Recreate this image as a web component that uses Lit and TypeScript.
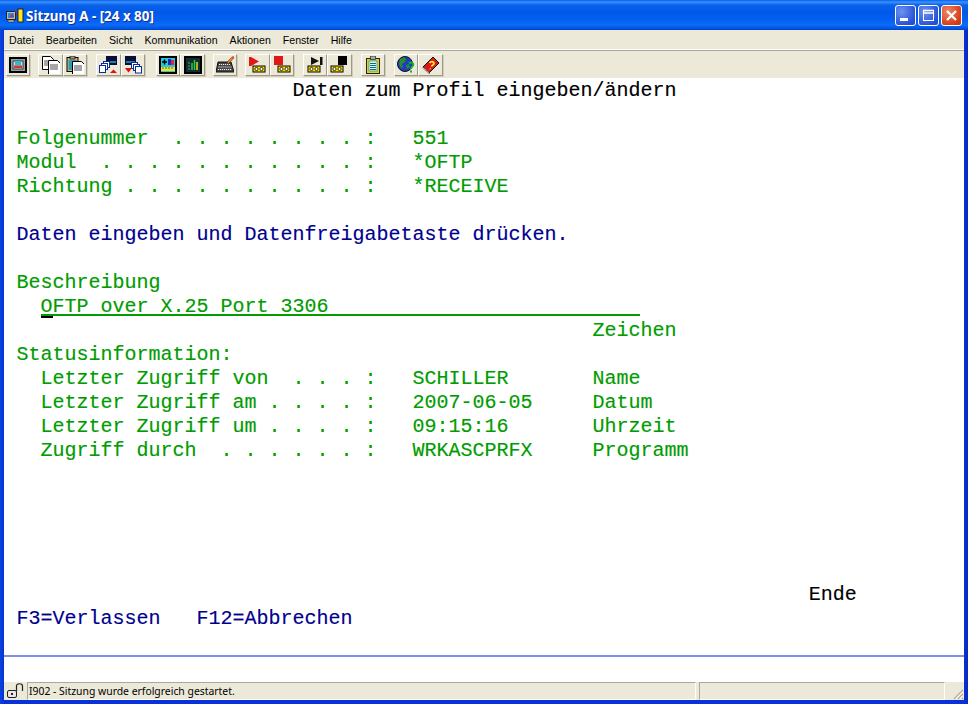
import { LitElement, html, css, svg } from "lit";
import { customElement } from "lit/decorators.js";

const tape = (x = 0) => svg`<g transform="translate(${x} 0)"><rect x="5" y="10" width="12" height="6" fill="#ffe400" stroke="#000" stroke-width="1"/><circle cx="8.5" cy="13" r="1.6" fill="#fff" stroke="#000" stroke-width=".8"/><circle cx="13.5" cy="13" r="1.6" fill="#fff" stroke="#000" stroke-width=".8"/></g>`;
const page = (x: number, y: number, w: number, h: number, c = "#000") => svg`<path d="M${x + .5} ${y + .5}h${w - 3}l3 3v${h - 3}h-${w}z" fill="#fff" stroke="${c}"/><path d="M${x + 2} ${y + 5}h${w - 4}M${x + 2} ${y + 7}h${w - 4}M${x + 2} ${y + 9}h${w - 4}" stroke="${c}" stroke-width=".7"/>`;

const icons = [
  svg`<rect x="1" y="2" width="16" height="14" fill="#8fa4a8" stroke="#000" stroke-width="2"/><rect x="4" y="5" width="10" height="8" fill="#d7d7d7" stroke="#222" stroke-width=".8"/><rect x="6" y="5.500" width="6" height="4" fill="#19c6d8"/><rect x="5" y="9.500" width="8" height="2.500" fill="#e53030"/>`,
  svg`${page(0, 0, 11, 13)}${page(6, 4, 12, 14)}`,
  svg`<rect x="1" y="1.500" width="11" height="14" fill="#d7b96a" stroke="#000"/><rect x="2.500" y="4" width="8" height="10" fill="#2d9cb0"/><rect x="4" y="0" width="5" height="3" fill="#999" stroke="#000" stroke-width=".7"/>${page(6, 5, 12, 13)}`,
  svg`<rect x="7" y="0" width="11" height="9" fill="#0b0b38"/><path d="M8 6h9" stroke="#24d5e0" stroke-width="1.2"/><rect x="4.500" y="5.500" width="6" height="6" fill="#fff" stroke="#0b2a9a"/><rect x="2.500" y="7.500" width="6" height="6" fill="#fff" stroke="#0b2a9a"/><rect x=".5" y="9.500" width="6" height="7" fill="#fff" stroke="#0b2a9a"/><path d="M11 17l3.500-3.500 3.500 3.500z" fill="#e01010"/>`,
  svg`<rect x="1" y="0" width="11" height="9" fill="#0b0b38"/><path d="M2 6h9" stroke="#24d5e0" stroke-width="1.2"/><rect x="7.500" y="6.500" width="6" height="6" fill="#fff" stroke="#0b2a9a"/><rect x="9.500" y="8.500" width="6" height="6" fill="#fff" stroke="#0b2a9a"/><rect x="11.500" y="10.500" width="6" height="6.500" fill="#fff" stroke="#0b2a9a"/><path d="M1 12h7l-3.500 4.500z" fill="#e01010"/>`,
  svg`<rect x="1" y="1" width="16" height="16" fill="#28c8d6" stroke="#000" stroke-width="2"/><path d="M3 6h5M5.500 3.500v5" stroke="#000" stroke-width="1.500"/><rect x="9" y="3" width="3" height="6" fill="#1030c0"/><rect x="12" y="4" width="3" height="5" fill="#e02050"/><rect x="2" y="11" width="14" height="4" fill="#f0e030"/><path d="M4 11v2M7 11v2M10 11v2M13 11v2" stroke="#333" stroke-width=".7"/>`,
  svg`<rect x="1" y="1" width="16" height="16" fill="#103030" stroke="#000" stroke-width="2"/><path d="M4 7h2M4 10h2M4 13h2" stroke="#888"/><path d="M8 14V7" stroke="#20d040" stroke-width="1.500"/><path d="M10.500 14V4" stroke="#20d040" stroke-width="1.500"/><path d="M13 14V6" stroke="#f0d020" stroke-width="1.500"/>`,
  svg`<path d="M2 6h13l3 10H0z" fill="#444" stroke="#111"/><path d="M3 8.500h11M2.500 11h13M2 13.500h14" stroke="#eee" stroke-width="1" stroke-dasharray="1.200 .8"/><path d="M11 6l5-5 1.500 1.500-5 5z" fill="#f08020" stroke="#333" stroke-width=".5"/><path d="M16 1l1-1 1 1-.5 1.500z" fill="#e02020"/>`,
  svg`<path d="M1 1v9h2V1zM3 1l8 4.500-8 4.500z" fill="#e01818"/>${tape()}`,
  svg`<rect x="1" y="0" width="9" height="9" fill="#e01818"/>${tape()}`,
  svg`<path d="M5 1l8 4-8 4z" fill="#111"/><rect x="14" y="1" width="2.500" height="8" fill="#111"/>${tape(-3)}`,
  svg`<rect x="8" y="0" width="9" height="9" fill="#000"/>${tape(-4)}`,
  svg`<rect x="2.500" y="2.500" width="13" height="15" fill="#e0d020" stroke="#222"/><rect x="5" y="5" width="8" height="10" fill="#d8f4f4" stroke="#14808c" stroke-width=".6"/><path d="M6 7.500h6M6 9.500h6M6 11.500h6M6 13.500h6" stroke="#0b6f84"/><rect x="6.500" y="0" width="5" height="3.500" fill="#aaa" stroke="#222" stroke-width=".7"/>`,
  svg`<circle cx="8" cy="8" r="7.500" fill="#1c3fb8"/><path d="M3 3l4-2 2 2-1 3-3 2 1 3-2 1-2-4zM9 9l3-1 1 3-3 2z" fill="#2a8a3a"/><circle cx="8" cy="8" r="7.500" fill="none" stroke="#111"/><path d="M12 7.500c2-2 5-.5 4 2-.500 1.200-2 1.500-2 3.500" fill="none" stroke="#18b030" stroke-width="2"/><rect x="13" y="14.500" width="2" height="2" fill="#18b030"/>`,
  svg`<path d="M1 11L11 1l6 6L7 17z" fill="#d81818" stroke="#111"/><path d="M7.500 17L1 11l-.5 1 7 6z" fill="#fff" stroke="#444" stroke-width=".5"/><path d="M7.500 7c1.500-2 4.500-1.500 4.500.500 0 1.500-2 1.500-2.500 3M8 12.500l.5.5" fill="none" stroke="#ffe030" stroke-width="1.800"/>`,
];

const groups: { gap: number; items: number[] }[] = [
  { gap: 0, items: [0] },
  { gap: 8, items: [1, 2] },
  { gap: 9, items: [3, 4] },
  { gap: 11, items: [5, 6] },
  { gap: 8, items: [7] },
  { gap: 8, items: [8, 9] },
  { gap: 9, items: [10, 11] },
  { gap: 9, items: [12] },
  { gap: 9, items: [13, 14] },
];

const menus = ["Datei", "Bearbeiten", "Sicht", "Kommunikation", "Aktionen", "Fenster", "Hilfe"];

type Row = [string, "g" | "b" | "k"] | null;
const rows: Row[] = [
  ["                        Daten zum Profil eingeben/ändern", "k"],
  null,
  [" Folgenummer  . . . . . . . . :   551", "g"],
  [" Modul  . . . . . . . . . . . :   *OFTP", "g"],
  [" Richtung . . . . . . . . . . :   *RECEIVE", "g"],
  null,
  [" Daten eingeben und Datenfreigabetaste drücken.", "b"],
  null,
  [" Beschreibung", "g"],
  null,
  ["                                                 Zeichen", "g"],
  [" Statusinformation:", "g"],
  ["   Letzter Zugriff von  . . . :   SCHILLER       Name", "g"],
  ["   Letzter Zugriff am . . . . :   2007-06-05     Datum", "g"],
  ["   Letzter Zugriff um . . . . :   09:15:16       Uhrzeit", "g"],
  ["   Zugriff durch  . . . . . . :   WRKASCPRFX     Programm", "g"],
  null, null, null, null, null,
  ["                                                                   Ende", "k"],
  [" F3=Verlassen   F12=Abbrechen", "b"],
  null,
];

@customElement("app-root")
export class AppRoot extends LitElement {
  static styles = css`
    :host { display: block; width: 968px; height: 704px; background: #fff; overflow: hidden; }
    .win { width: 968px; height: 704px; box-sizing: border-box; display: flex; flex-direction: column;
      background: #0a3ce0; border-radius: 7px 7px 0 0; padding: 0 4px 4px; border-bottom: 0;
      background-image: linear-gradient(90deg, #0a46dc 0, #0831d9 4px, #0831d9 964px, #0a2ab8 968px); }
    .title { height: 30px; flex: none; margin: 0 -4px; padding: 0 6px 0 6px; display: flex; align-items: center; box-sizing: border-box;
      background: linear-gradient(180deg, #0a5ce8 0, #3a93ff 2px, #0a62ea 5px, #0058e8 12px, #0460f2 20px, #0a6cf8 25px, #0050dc 29px, #0040c0 30px); }
    .appicon { width: 18px; height: 16px; flex: none; margin-right: 2px; margin-top: 1px; }
    .ttext { font: bold 13.4px "Noto Sans", sans-serif; color: #fff; text-shadow: 1px 1px 0 #0f2f8f; flex: 1; white-space: pre; padding-top: 2px; }
    .wb { width: 21px; height: 21px; border: 1px solid #fff; border-radius: 3px; box-sizing: border-box; margin-left: 2px; display: flex; align-items: center; justify-content: center;
      background: radial-gradient(circle at 30% 30%, #6f92f0, #2a55d8 70%, #2048c8); }
    .wb.close { background: radial-gradient(circle at 30% 30%, #ee8866, #d8431e 65%, #c23010); }
    .wb.min { margin-left: 0; }
    .menu { height: 20px; flex: none; background: #ece9d8; display: flex; align-items: center; font: 10.6px "Liberation Sans", sans-serif; color: #000; padding-left: 5px; gap: 12px; border-bottom: 1px solid #aca899; box-shadow: inset 0 -1px 0 #fff; box-sizing: content-box; }
    .tb { height: 27px; flex: none; background: #ece9d8; display: flex; align-items: center; padding-left: 2px; box-sizing: border-box; }
    .grp { display: flex; }
    .btn { width: 24.4px; height: 22px; box-sizing: border-box; display: flex; align-items: center; justify-content: center;
      border: 1px solid; border-color: #fff #9d9a8c #9d9a8c #fff; box-shadow: 1px 1px 0 #d0cdbc; background: #ece9d8; }
    .btn svg { width: 18px; height: 18px; display: block; }
    .term { height: 604px; flex: none; background: #fff; font: 20px/24px "Liberation Mono", monospace; -webkit-text-stroke: 0.15px currentColor; white-space: pre; padding: 1px 0 0; box-sizing: border-box; display: flex; flex-direction: column; text-indent: 0.5px; }
    .row { height: 24px; flex: none; }
    .g { color: #009c00; }
    .b { color: #000090; }
    .k { color: #000; }
    .field { position: relative; display: inline-block; width: 599px; height: 19px; border-bottom: 2px solid #009c00; vertical-align: top; text-indent: 0; }
    .cursor { position: absolute; left: 0; top: 21px; width: 12px; height: 2px; background: #000; }
    .rule { height: 2px; background: #7b8ff0; flex: none; }
    .status { height: 18px; flex: none; background: #ece9d8; display: flex; font: 10.4px "Noto Sans", sans-serif; color: #000; box-sizing: border-box; }
    .sicon { width: 23px; flex: none; display: flex; align-items: center; justify-content: center; }
    .sp { border: 1px solid; border-color: #aca899 #fff #fff #aca899; display: flex; align-items: center; padding-left: 1px; box-sizing: border-box; }
    .s1 { width: 669px; flex: none; overflow: hidden; white-space: pre; }
    .s2 { width: 246px; flex: none; margin-left: 3px; }
    .grip { flex: 1; display: flex; align-items: flex-end; justify-content: flex-end; }
  `;

  private renderRow(r: Row, i: number) {
    if (i === 9) {
      return html`<div class="row g">   <span class="field">OFTP over X.25 Port 3306<span class="cursor"></span></span></div>`;
    }
    if (!r) return html`<div class="row"></div>`;
    return html`<div class="row ${r[1]}">${r[0]}</div>`;
  }

  render() {
    return html`<div class="win">
      <div class="title">
        <svg class="appicon" viewBox="0 0 18 16"><rect x=".5" y="3.500" width="9" height="8" fill="#bbb" stroke="#222"/><rect x="2" y="5" width="6" height="5" fill="#2090e0"/><path d="M3 9l3-3 2 3z" fill="#e02040"/><path d="M2 12h6v2H2z" fill="#ccc" stroke="#222" stroke-width=".6"/><path d="M9 3l3 5" stroke="#e01010"/><rect x="12" y="1" width="5" height="13" fill="#ffe820" stroke="#222"/></svg>
        <span class="ttext">Sitzung A - [24 x 80]</span>
        <div class="wb min"><svg width="19" height="19" viewBox="0 0 19 19"><rect x="4" y="12" width="8" height="3" fill="#fff"/></svg></div>
        <div class="wb"><svg width="19" height="19" viewBox="0 0 19 19"><path d="M4 4.500h11M4 7h11" stroke="#fff" stroke-width="1.500"/><rect x="4.500" y="4.500" width="10" height="10" fill="none" stroke="#fff"/></svg></div>
        <div class="wb close"><svg width="19" height="19" viewBox="0 0 19 19"><path d="M5 5l9 9M14 5l-9 9" stroke="#fff" stroke-width="2.200"/></svg></div>
      </div>
      <div class="menu">${menus.map((m) => html`<span>${m}</span>`)}</div>
      <div class="tb">
        ${groups.map((g) => html`<div class="grp" style="margin-left:${g.gap}px">
          ${g.items.map((n) => html`<div class="btn"><svg viewBox="0 0 18 18">${icons[n]}</svg></div>`)}
        </div>`)}
      </div>
      <div class="term">
        ${rows.map((r, i) => this.renderRow(r, i))}
        <div class="rule"></div>
      </div>
      <div class="status">
        <div class="sicon"><svg width="20" height="16" viewBox="0 0 20 16"><rect x="1.500" y="7.500" width="9" height="7" rx="1.500" fill="#e8e8e8" stroke="#222"/><rect x="5" y="10" width="2" height="2" fill="#222"/><path d="M10.500 8V3c0-3 6-3 6 0v5" fill="none" stroke="#222" stroke-width="1.200"/></svg></div>
        <div class="sp s1">I902 - Sitzung wurde erfolgreich gestartet.</div>
        <div class="sp s2"></div>
        <div class="grip"><svg width="12" height="12" viewBox="0 0 12 12"><path d="M11 2L2 11M11 6L6 11M11 10L10 11" stroke="#aca899" stroke-width="1.300"/><path d="M11 3.500L3.500 11M11 7.500L7.500 11" stroke="#fff"/></svg></div>
      </div>
    </div>`;
  }
}
